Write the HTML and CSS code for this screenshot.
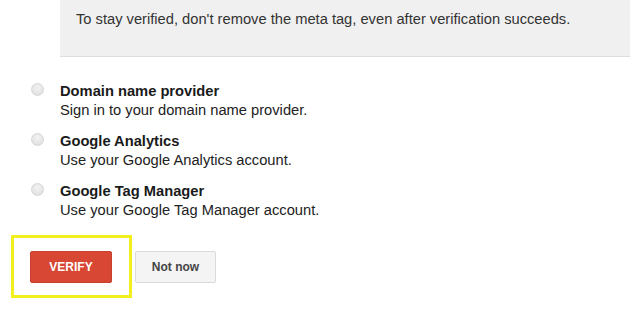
FILE: index.html
```html
<!DOCTYPE html>
<html>
<head>
<meta charset="utf-8">
<link rel="stylesheet" href="styles.css">
</head>
<body>
<div class="note">To stay verified, don't remove the meta tag, even after verification succeeds.</div>
<div class="options">
  <label class="option">
    <span class="radio"></span>
    <span class="opt-text">
      <span class="opt-title">Domain name provider</span>
      <span class="opt-desc">Sign in to your domain name provider.</span>
    </span>
  </label>
  <label class="option">
    <span class="radio"></span>
    <span class="opt-text">
      <span class="opt-title">Google Analytics</span>
      <span class="opt-desc">Use your Google Analytics account.</span>
    </span>
  </label>
  <label class="option">
    <span class="radio"></span>
    <span class="opt-text">
      <span class="opt-title">Google Tag Manager</span>
      <span class="opt-desc">Use your Google Tag Manager account.</span>
    </span>
  </label>
</div>
<div class="actions">
  <div class="highlight">
    <button class="btn btn-primary">VERIFY</button>
  </div>
  <button class="btn btn-secondary">Not now</button>
</div>
</body>
</html>
```

FILE: styles.css
```css
html, body {
  margin: 0;
  padding: 0;
  background: #ffffff;
}
body {
  font-family: "Liberation Sans", Arial, sans-serif;
  color: #222222;
  width: 630px;
  height: 319px;
  overflow: hidden;
}
.note {
  margin-left: 60px;
  height: 57px;
  box-sizing: border-box;
  padding: 10px 0 0 16px;
  background: #f0f0f0;
  border-bottom: 1px solid #dedede;
  font-size: 14.7px;
  line-height: 18px;
  color: #333333;
}
.options {
  display: flex;
  flex-direction: column;
  gap: 12px;
  padding: 25px 0 0 31px;
}
.option {
  display: flex;
  gap: 16px;
  align-items: flex-start;
}
.radio {
  width: 13px;
  height: 13px;
  margin-top: 1px;
  border-radius: 50%;
  box-sizing: border-box;
  border: 1px solid #d6d6d6;
  background: radial-gradient(circle at 50% 35%, #f2f2f2 0%, #e3e3e3 70%, #d9d9d9 100%);
  flex: none;
}
.opt-text {
  display: flex;
  flex-direction: column;
  font-size: 14.7px;
  line-height: 19px;
}
.opt-title {
  font-weight: bold;
  color: #1a1a1a;
}
.opt-desc {
  color: #222222;
}
.actions {
  display: flex;
  align-items: center;
  gap: 3px;
  margin: 15px 0 0 11px;
}
.highlight {
  border: 3px solid #f2ef1c;
  padding: 13px 17px 12px 16px;
}
.btn {
  height: 32px;
  box-sizing: border-box;
  border-radius: 2px;
  font-family: "Liberation Sans", Arial, sans-serif;
  font-weight: bold;
  font-size: 12px;
  cursor: pointer;
  padding: 0;
}
.btn-primary {
  width: 82px;
  background: #d74733;
  border: 1px solid #c9412e;
  color: #ffffff;
}
.btn-secondary {
  width: 81px;
  background: #f4f4f4;
  border: 1px solid #dadada;
  color: #444444;
}
```
